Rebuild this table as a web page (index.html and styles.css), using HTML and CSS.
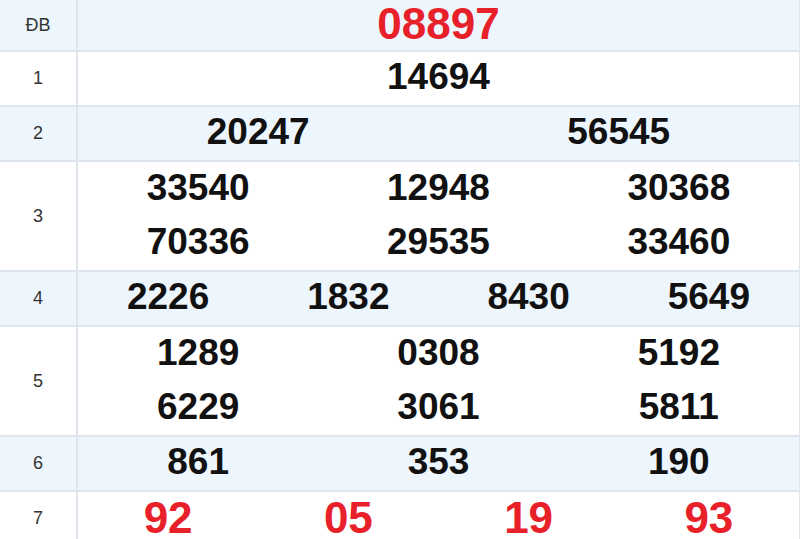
FILE: index.html
```html
<!DOCTYPE html>
<html lang="vi">
<head>
<meta charset="utf-8">
<title>Kết quả xổ số</title>
<link rel="stylesheet" href="styles.css">
</head>
<body>
<div class="table">
  <div class="row alt first">
    <div class="label">ĐB</div>
    <div class="vals c1"><span class="num red">08897</span></div>
  </div>
  <div class="row">
    <div class="label">1</div>
    <div class="vals c1"><span class="num">14694</span></div>
  </div>
  <div class="row alt">
    <div class="label">2</div>
    <div class="vals c2"><span class="num">20247</span><span class="num">56545</span></div>
  </div>
  <div class="row double">
    <div class="label">3</div>
    <div class="vals c3">
      <span class="num">33540</span><span class="num">12948</span><span class="num">30368</span>
      <span class="num">70336</span><span class="num">29535</span><span class="num">33460</span>
    </div>
  </div>
  <div class="row alt">
    <div class="label">4</div>
    <div class="vals c4"><span class="num">2226</span><span class="num">1832</span><span class="num">8430</span><span class="num">5649</span></div>
  </div>
  <div class="row double">
    <div class="label">5</div>
    <div class="vals c3">
      <span class="num">1289</span><span class="num">0308</span><span class="num">5192</span>
      <span class="num">6229</span><span class="num">3061</span><span class="num">5811</span>
    </div>
  </div>
  <div class="row alt">
    <div class="label">6</div>
    <div class="vals c3"><span class="num">861</span><span class="num">353</span><span class="num">190</span></div>
  </div>
  <div class="row">
    <div class="label">7</div>
    <div class="vals c4"><span class="num red">92</span><span class="num red">05</span><span class="num red">19</span><span class="num red">93</span></div>
  </div>
</div>
</body>
</html>
```

FILE: styles.css
```css
html, body {
  margin: 0;
  padding: 0;
  background: #ffffff;
}
body {
  font-family: "Liberation Sans", Arial, sans-serif;
  overflow: hidden;
}
.table {
  width: 799px;
  border-right: 1px solid #dfe5ec;
}
.row {
  display: flex;
  border-bottom: 2px solid #dfe5ec;
  background: #ffffff;
}
.row.alt {
  background: #edf5fd;
}
.label {
  width: 76px;
  flex: none;
  border-right: 2px solid #dfe5ec;
  display: flex;
  align-items: center;
  justify-content: center;
  font-size: 18px;
  color: #333333;
}
.vals {
  flex: 1;
  display: grid;
  grid-auto-rows: 53px;
}
.double .vals {
  grid-auto-rows: 54px;
}
.first .vals {
  grid-auto-rows: 50px;
}
.c1 { grid-template-columns: 1fr; }
.c2 { grid-template-columns: repeat(2, 1fr); }
.c3 { grid-template-columns: repeat(3, 1fr); }
.c4 { grid-template-columns: repeat(4, 1fr); }
.num {
  display: flex;
  align-items: center;
  justify-content: center;
  font-weight: bold;
  font-size: 37px;
  color: #111111;
  padding-bottom: 3px;
}
.num.red {
  font-size: 44px;
  color: #e8202a;
  padding-bottom: 2px;
}
.first .num.red {
  padding-bottom: 3px;
}
```
